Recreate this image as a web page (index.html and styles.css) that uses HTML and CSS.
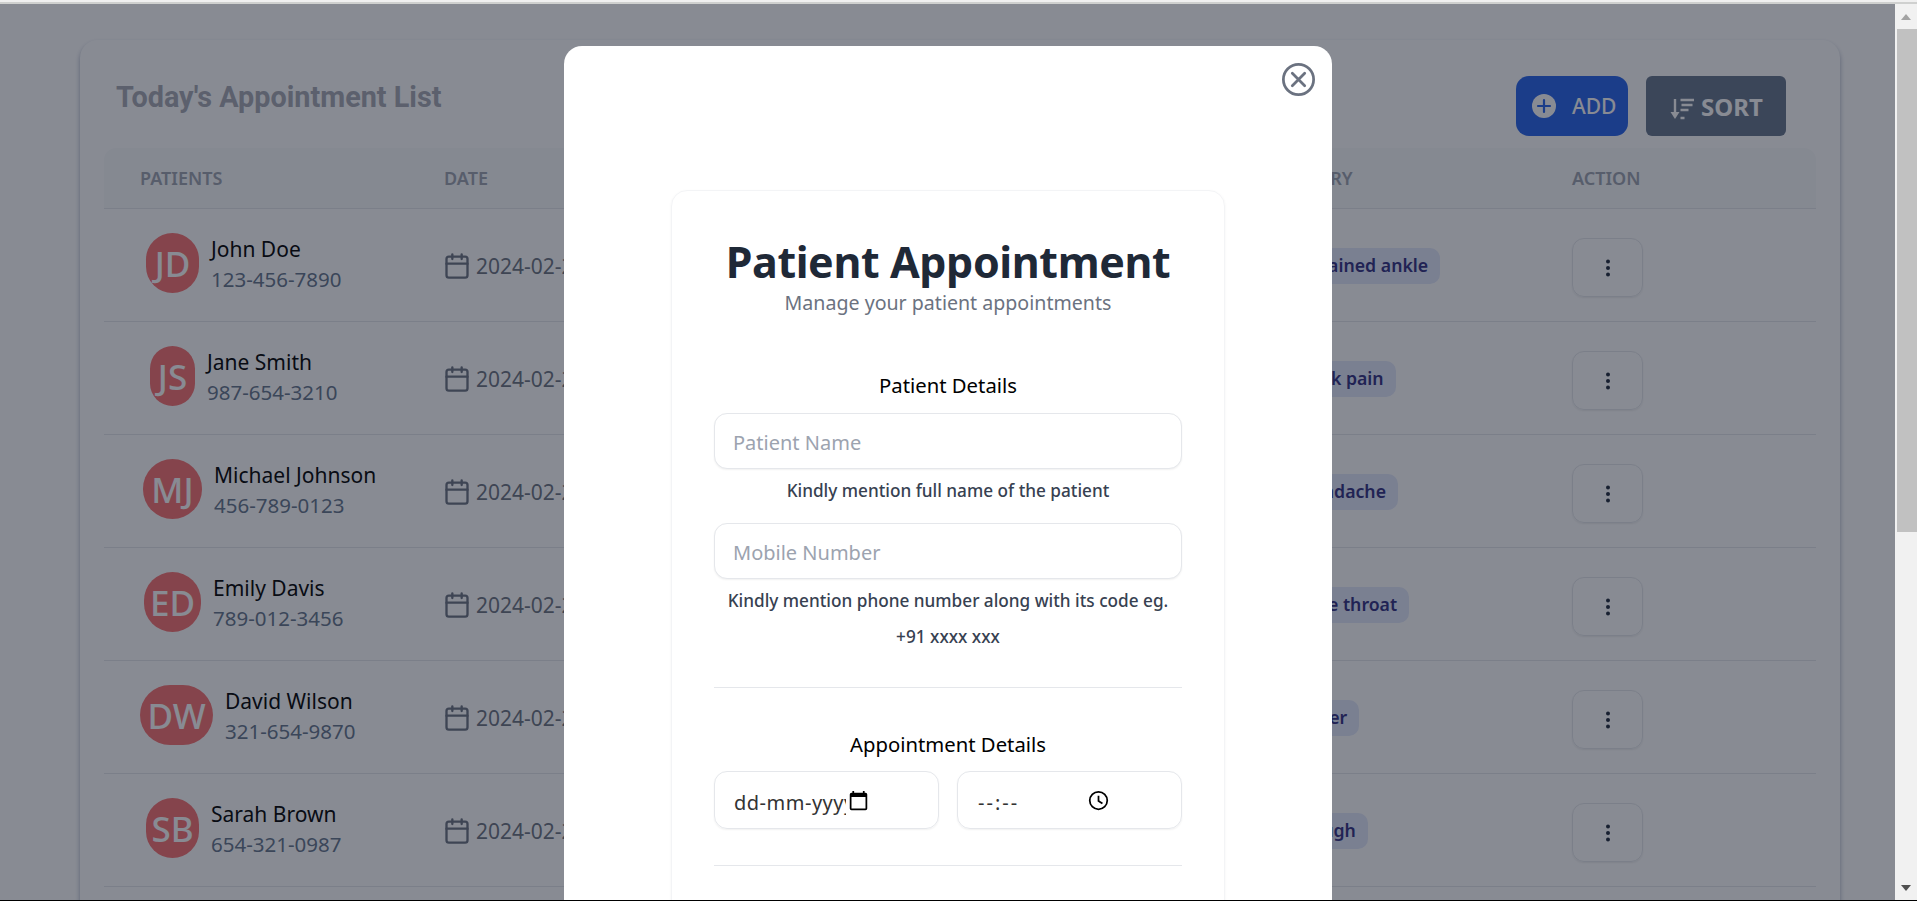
FILE: index.html
```html
<!DOCTYPE html>
<html lang="en">
<head>
<meta charset="utf-8">
<title>Today's Appointment List</title>
<link rel="stylesheet" href="styles.css">
</head>
<body>
<div class="app">
  <div class="strip"></div>
  <div class="viewport">
    <main class="page">
      <section class="card">
        <header class="card-head">
          <h1 class="list-title">Today's Appointment List</h1>
          <div class="head-actions">
            <button class="btn btn-add">
              <svg class="add-icon" viewBox="0 0 24 24"><circle cx="12" cy="12" r="12" fill="#fff"/><path d="M12 6v12M6 12h12" stroke="#2563eb" stroke-width="2.2" stroke-linecap="round"/></svg>
              <span>ADD</span>
            </button>
            <button class="btn btn-sort">
              <svg class="sort-icon" viewBox="0 0 25 24" fill="none" stroke="#fff" stroke-width="2.4"><path d="M5 2v16"/><path d="M0.500 15h9L5 22z" fill="#fff" stroke="none"/><path d="M10.500 3h13.500M11.500 8h11M10.500 13h8M10.500 21h4"/></svg>
              <span>SORT</span>
            </button>
          </div>
        </header>
        <div class="thead">
          <div>PATIENTS</div><div>DATE</div><div>HISTORY</div><div>ACTION</div>
        </div>
        <div class="row">
          <div class="patient"><span class="avatar av-jd">JD</span><div><div class="name">John Doe</div><div class="phone">123-456-7890</div></div></div>
          <div class="date"><svg class="cal" viewBox="0 0 24 24"><rect x="3" y="4" width="18" height="18" rx="2"/><path d="M16 2v4M8 2v4M3 10h18"/></svg>2024-02-20</div>
          <div><span class="pill">Sprained ankle</span></div>
          <button class="more"><svg viewBox="0 0 24 24"><circle cx="12" cy="5.5" r="2"/><circle cx="12" cy="12" r="2"/><circle cx="12" cy="18.5" r="2"/></svg></button>
        </div>
        <div class="row">
          <div class="patient"><span class="avatar av-js">JS</span><div><div class="name">Jane Smith</div><div class="phone">987-654-3210</div></div></div>
          <div class="date"><svg class="cal" viewBox="0 0 24 24"><rect x="3" y="4" width="18" height="18" rx="2"/><path d="M16 2v4M8 2v4M3 10h18"/></svg>2024-02-20</div>
          <div><span class="pill">Back pain</span></div>
          <button class="more"><svg viewBox="0 0 24 24"><circle cx="12" cy="5.5" r="2"/><circle cx="12" cy="12" r="2"/><circle cx="12" cy="18.5" r="2"/></svg></button>
        </div>
        <div class="row">
          <div class="patient"><span class="avatar av-mj">MJ</span><div><div class="name">Michael Johnson</div><div class="phone">456-789-0123</div></div></div>
          <div class="date"><svg class="cal" viewBox="0 0 24 24"><rect x="3" y="4" width="18" height="18" rx="2"/><path d="M16 2v4M8 2v4M3 10h18"/></svg>2024-02-20</div>
          <div><span class="pill">Headache</span></div>
          <button class="more"><svg viewBox="0 0 24 24"><circle cx="12" cy="5.5" r="2"/><circle cx="12" cy="12" r="2"/><circle cx="12" cy="18.5" r="2"/></svg></button>
        </div>
        <div class="row">
          <div class="patient"><span class="avatar av-ed">ED</span><div><div class="name">Emily Davis</div><div class="phone">789-012-3456</div></div></div>
          <div class="date"><svg class="cal" viewBox="0 0 24 24"><rect x="3" y="4" width="18" height="18" rx="2"/><path d="M16 2v4M8 2v4M3 10h18"/></svg>2024-02-20</div>
          <div><span class="pill">Sore throat</span></div>
          <button class="more"><svg viewBox="0 0 24 24"><circle cx="12" cy="5.5" r="2"/><circle cx="12" cy="12" r="2"/><circle cx="12" cy="18.5" r="2"/></svg></button>
        </div>
        <div class="row">
          <div class="patient"><span class="avatar av-dw">DW</span><div><div class="name">David Wilson</div><div class="phone">321-654-9870</div></div></div>
          <div class="date"><svg class="cal" viewBox="0 0 24 24"><rect x="3" y="4" width="18" height="18" rx="2"/><path d="M16 2v4M8 2v4M3 10h18"/></svg>2024-02-20</div>
          <div><span class="pill">Fever</span></div>
          <button class="more"><svg viewBox="0 0 24 24"><circle cx="12" cy="5.5" r="2"/><circle cx="12" cy="12" r="2"/><circle cx="12" cy="18.5" r="2"/></svg></button>
        </div>
        <div class="row">
          <div class="patient"><span class="avatar av-sb">SB</span><div><div class="name">Sarah Brown</div><div class="phone">654-321-0987</div></div></div>
          <div class="date"><svg class="cal" viewBox="0 0 24 24"><rect x="3" y="4" width="18" height="18" rx="2"/><path d="M16 2v4M8 2v4M3 10h18"/></svg>2024-02-20</div>
          <div><span class="pill">Cough</span></div>
          <button class="more"><svg viewBox="0 0 24 24"><circle cx="12" cy="5.5" r="2"/><circle cx="12" cy="12" r="2"/><circle cx="12" cy="18.5" r="2"/></svg></button>
        </div>
      </section>
      <div class="overlay">
        <div class="modal">
          <button class="close"><svg viewBox="0 0 24 24"><circle cx="12" cy="12" r="11"/><path d="M7.5 7.5l9 9M16.500 7.500l-9 9"/></svg></button>
          <form class="form-card">
            <h2 class="form-title">Patient Appointment</h2>
            <p class="form-sub">Manage your patient appointments</p>
            <h3 class="section first">Patient Details</h3>
            <input class="field" type="text" placeholder="Patient Name">
            <p class="help">Kindly mention full name of the patient</p>
            <input class="field second" type="text" placeholder="Mobile Number">
            <p class="help help-two">Kindly mention phone number along with its code eg. +91 xxxx xxx</p>
            <hr class="rule">
            <h3 class="section">Appointment Details</h3>
            <div class="pair">
              <div class="picker">
                <span class="picker-text date-text">dd-mm-yyyy</span>
                <svg class="picker-icon" viewBox="0 0 24 24"><path fill="#000" d="M20 3h-1V1h-2v2H7V1H5v2H4a2 2 0 0 0-2 2v16a2 2 0 0 0 2 2h16a2 2 0 0 0 2-2V5a2 2 0 0 0-2-2zm0 18H4V8h16v13z"/></svg>
              </div>
              <div class="picker">
                <span class="picker-text time-text">--:--</span>
                <svg class="picker-icon clock" viewBox="0 0 24 24"><circle cx="12" cy="12" r="10" fill="none" stroke="#000" stroke-width="2"/><path d="M12 6.500v6l4.500 3" fill="none" stroke="#000" stroke-width="2"/></svg>
              </div>
            </div>
            <hr class="rule rule-two">
          </form>
        </div>
      </div>
    </main>
    <aside class="scrollbar">
      <div class="arrow arrow-up"></div>
      <div class="thumb"></div>
      <div class="arrow arrow-down"></div>
    </aside>
  </div>
  <div class="edge"></div>
</div>
</body>
</html>
```
FILE: styles.css
```css
* { box-sizing: border-box; }
html, body { margin: 0; height: 100%; overflow: hidden; }
body { font-family: "Noto Sans", "Open Sans", sans-serif; background: #fff; }
button { font-family: inherit; border: 0; padding: 0; background: none; }
h1, h2, h3, p { margin: 0; }

.app { height: 901px; display: flex; flex-direction: column; }
.strip { height: 4px; flex: none; background: #f0f0f0; border-bottom: 2px solid #cfd0cf; }
.viewport { flex: 1; min-height: 0; display: flex; }
.edge { height: 1px; flex: none; background: #000; }

.page { flex: 1; min-width: 0; position: relative; overflow: hidden; padding: 36px 55px 0 80px; background: #fff; }

.card { height: 900px; background: #fff; border-radius: 18px; padding: 36px 24px 0; box-shadow: 0 3px 5px rgba(30, 50, 100, .4); }
.card-head { display: flex; justify-content: space-between; align-items: flex-start; padding: 0 30px 0 12px; margin-bottom: 12px; }
.list-title { font: 700 28.800px/38px Roboto, sans-serif; color: #a6a9b2; margin-top: 2px; }
.head-actions { display: flex; gap: 18px; }
.btn { height: 60px; display: flex; align-items: center; color: #fff; }
.btn-add { width: 112px; background: #2563eb; border-radius: 13px; padding-left: 16px; font-size: 21px; font-weight: 500; gap: 16px; }
.add-icon { width: 24px; height: 24px; }
.btn-sort { width: 140px; background: #64748b; border-radius: 6px; padding-left: 24px; font-size: 24px; font-weight: 700; gap: 6px; }
.sort-icon { width: 25px; height: 26px; margin-top: 6px; }

.thead, .row { display: grid; padding-left: 36px; align-items: center; }
.thead { grid-template-columns: 304px 832px 296px 1fr; height: 61px; background: #f9fafb; border-radius: 12px 12px 0 0; border-bottom: 1px solid #e5e7eb; font-size: 18px; font-weight: 600; color: #9ca3af; }
.row { grid-template-columns: 304px 844px 284px 1fr; height: 113px; border-bottom: 1px solid #e5e7eb; }

.patient { display: flex; align-items: center; gap: 12px; margin-top: -4px; }
.avatar { height: 60px; flex: none; display: flex; align-items: center; justify-content: center; border-radius: 30px; background: #f87171; color: #fff; font-size: 35px; font-weight: 500; }
.av-jd { width: 53px; margin-left: 6px; }
.av-js { width: 45px; margin-left: 10px; }
.av-mj { width: 59px; margin-left: 3px; }
.av-ed { width: 57px; margin-left: 4px; }
.av-dw { width: 73px; }
.av-sb { width: 53px; margin-left: 6px; }
.name { font-size: 21px; line-height: 30px; color: #000; padding-top: 1px; }
.phone { font-size: 20.500px; line-height: 30px; color: #64748b; }

.date { display: flex; align-items: center; gap: 5px; font-size: 21px; color: #6b7280; padding-top: 2px; }
.cal { width: 28px; height: 28px; margin-left: -1px; fill: none; stroke: #6b7280; stroke-width: 2; stroke-linecap: round; stroke-linejoin: round; }
.pill { display: inline-block; height: 36px; line-height: 35px; padding: 0 12px; border-radius: 10px; background: #e2e8fb; color: #312e81; font-size: 17.700px; font-weight: 600; position: relative; top: 1px; }
.more { width: 71px; height: 59px; margin-top: 5px; border: 1px solid #e5e7eb; border-radius: 12px; box-shadow: 0 1px 2px rgba(0, 0, 0, .08); display: flex; align-items: center; justify-content: center; }
.more svg { width: 24px; height: 24px; fill: #1e293b; }

.overlay { position: absolute; inset: 0; background: rgba(17, 24, 39, .5); overflow: hidden; }
.modal { position: relative; width: 768px; height: 1200px; margin: 42px 0 0 564px; padding: 144px 107px 0; background: #fff; border-radius: 18px 18px 0 0; }
.close { position: absolute; top: 17px; right: 17px; width: 33px; height: 33px; }
.close svg { display: block; width: 33px; height: 33px; fill: none; stroke: #6b7280; stroke-width: 2; stroke-linecap: round; }

.form-card { height: 900px; padding: 0 42px; border: 1px solid #f3f4f6; border-radius: 16px; box-shadow: 0 1px 3px rgba(0, 0, 0, .05); text-align: center; }
.form-title { font-size: 43px; line-height: 60px; font-weight: 700; letter-spacing: -.4px; white-space: nowrap; color: #1f2937; margin-top: 41px; }
.form-sub { font-size: 19.600px; line-height: 28px; color: #6b7280; margin-top: -3px; }
.section { font-size: 20.300px; line-height: 28px; font-weight: 400; color: #000; }
.section.first { margin-top: 54px; }
.field { display: block; width: 100%; height: 56px; margin-top: 14px; padding: 2px 18px 0; border: 1px solid #e5e7eb; border-radius: 13px; box-shadow: 0 1px 2px rgba(0, 0, 0, .06); font: 20px "Noto Sans", sans-serif; outline: none; }
.field::placeholder { color: #9ca3af; opacity: 1; }
.field.second { margin-top: 0; }
.help { font-size: 17.200px; line-height: 36px; font-weight: 500; color: #374151; margin: 4px 0 14px; }
.help-two { margin: 4px 0 0; }
.rule { border: 0; border-top: 1px solid #e5e7eb; margin: 32px 0 42px; }
.pair { display: grid; grid-template-columns: 1fr 1fr; gap: 18px; margin-top: 13px; }
.picker { height: 58px; display: flex; align-items: center; border: 1px solid #e5e7eb; border-radius: 13px; box-shadow: 0 1px 2px rgba(0, 0, 0, .06); overflow: hidden; }
.picker-text { display: block; overflow: hidden; white-space: nowrap; font-size: 20px; color: #333; text-align: left; margin-top: 4px; }
.date-text { width: 112px; margin-left: 19px; letter-spacing: .5px; }
.time-text { width: 108px; margin-left: 20px; letter-spacing: 2px; }
.picker-icon { width: 21px; height: 21px; margin: 0 0 0 2px; }
.rule-two { margin-top: 36px; }

.scrollbar { width: 22px; flex: none; display: flex; flex-direction: column; background: #f1f1f1; }
.arrow { height: 25px; display: flex; align-items: center; justify-content: center; flex: none; }
.arrow::before { content: ""; border-left: 5.500px solid transparent; border-right: 5.500px solid transparent; }
.arrow-up::before { border-bottom: 6px solid #a3a3a3; }
.arrow-down { margin-top: auto; }
.arrow-down::before { border-top: 6px solid #505050; }
.thumb { height: 503px; margin-left: 2px; background: #c1c1c1; }
```
